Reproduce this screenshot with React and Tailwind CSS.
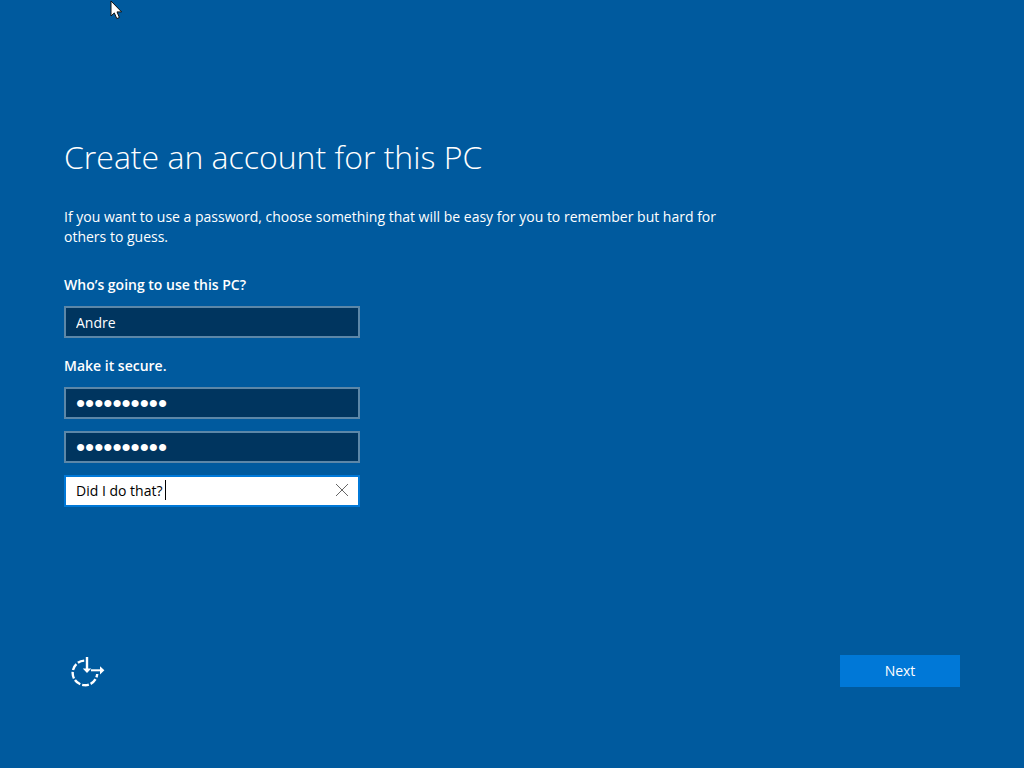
import { useState } from 'react';

const fieldBase = 'block w-full h-8 border-2 px-[10px] outline-none';
const darkField = 'bg-[#00355f] border-[#5c87a8] text-white';

function EaseOfAccessIcon() {
  return (
    <svg width="36" height="32" viewBox="0 0 36 32" fill="none" stroke="#fff" strokeWidth="2.4">
      <path d="M14.2 5.6A12.3 12.3 0 1 0 27.2 19" strokeDasharray="6.8 1.9" />
      <path d="M17 2V14" />
      <path d="M21 15.3H31" strokeWidth="2" />
      <path d="M12.8 13.6H21.2L17 18Z" fill="#fff" stroke="none" />
      <path d="M30 11.2V19.4L34.4 15.3Z" fill="#fff" stroke="none" />
    </svg>
  );
}

function Cursor() {
  return (
    <svg className="absolute left-[110px] top-0" width="13" height="20" viewBox="0 0 13 20" aria-hidden="true">
      <path d="M1 1V16L4.3 12.9L6.8 18.6L9.4 17.5L7 11.9H11.6Z" fill="#fff" stroke="#111" strokeWidth="1" />
    </svg>
  );
}

export default function App() {
  const [name, setName] = useState('Andre');
  const [password, setPassword] = useState('carlwinslo');
  const [confirm, setConfirm] = useState('carlwinslo');
  const [hint, setHint] = useState('Did I do that?');

  return (
    <div className="relative min-h-screen flex flex-col bg-[#005a9e] text-white px-16 pt-[131px] pb-[81px] font-['Open_Sans','Noto_Sans',sans-serif] text-[14px] leading-5">
      <Cursor />
      <form className="flex-1 flex flex-col" onSubmit={(e) => e.preventDefault()}>
        <h1 className="text-[32px] leading-[52px] font-light">Create an account for this PC</h1>
        <p className="mt-6 max-w-[672px]">
          If you want to use a password, choose something that will be easy for you to remember but hard for others to guess.
        </p>

        <div className="w-[296px] mt-7">
          <label htmlFor="name" className="block font-semibold">Who’s going to use this PC?</label>
          <input
            id="name"
            className={`${fieldBase} ${darkField} mt-[11px]`}
            value={name}
            onChange={(e) => setName(e.target.value)}
          />

          <label htmlFor="password" className="block font-semibold mt-[18px]">Make it secure.</label>
          <input
            id="password"
            type="password"
            className={`${fieldBase} ${darkField} mt-[11px] font-['Liberation_Sans',sans-serif] text-[26px]`}
            value={password}
            onChange={(e) => setPassword(e.target.value)}
          />
          <input
            type="password"
            aria-label="Re-enter password"
            className={`${fieldBase} ${darkField} mt-3 font-['Liberation_Sans',sans-serif] text-[26px]`}
            value={confirm}
            onChange={(e) => setConfirm(e.target.value)}
          />
          <div className="relative mt-3 flex items-center h-8 pb-[2px] bg-white border-2 border-[#0078d7] text-black">
            <input
              aria-label="Password hint"
              className="flex-1 min-w-0 h-full px-[10px] outline-none"
              value={hint}
              onChange={(e) => setHint(e.target.value)}
            />
            <span className="absolute left-[99px] top-[3px] w-px h-5 bg-black" />
            <button type="button" aria-label="Clear" className="w-8 h-full flex items-center justify-center" onClick={() => setHint('')}>
              <svg width="14" height="14" viewBox="0 0 14 14" stroke="#666" strokeWidth="1">
                <path d="M1 1L13 13M13 1L1 13" />
              </svg>
            </button>
          </div>
        </div>

        <div className="mt-auto flex items-center justify-between">
          <button type="button" aria-label="Ease of access" className="ml-[6px]">
            <EaseOfAccessIcon />
          </button>
          <button type="submit" className="w-[120px] h-8 bg-[#0078d7]">Next</button>
        </div>
      </form>
    </div>
  );
}
